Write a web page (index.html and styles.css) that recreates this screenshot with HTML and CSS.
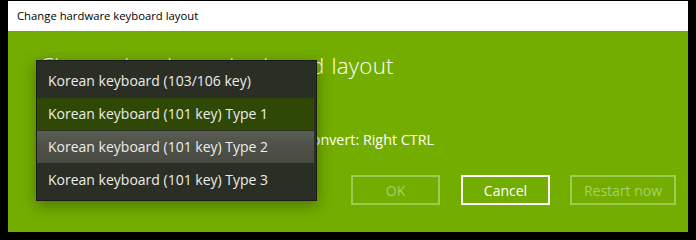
FILE: index.html
```html
<!DOCTYPE html>
<html lang="en">
<head>
    <meta charset="UTF-8">
    <title>Change hardware keyboard layout</title>
    <link rel="stylesheet" href="styles.css">
</head>
<body>
    <div class="window">
        <div class="titlebar">Change hardware keyboard layout</div>
        <div class="content">
            <h1>Change hardware keyboard layout</h1>
            <div class="combo">Korean keyboard (101 key) Type 1</div>
            <p class="info">Hangul/English toggle: Right ALT, Hanja convert: Right CTRL</p>
            <div class="buttons">
                <button class="btn btn-ok" disabled>OK</button>
                <button class="btn btn-cancel">Cancel</button>
                <button class="btn btn-restart" disabled>Restart now</button>
            </div>
            <ul class="dropdown">
                <li class="item">Korean keyboard (103/106 key)</li>
                <li class="item selected">Korean keyboard (101 key) Type 1</li>
                <li class="item hover">Korean keyboard (101 key) Type 2</li>
                <li class="item">Korean keyboard (101 key) Type 3</li>
            </ul>
        </div>
    </div>
</body>
</html>
```

FILE: styles.css
```css
html, body {
    margin: 0;
    padding: 0;
    background: #000;
    font-family: "Open Sans", "Noto Sans", sans-serif;
}
.window {
    position: relative;
    width: 680px;
    height: 231px;
    margin: 1px 8px 0 8px;
    background: #73ad00;
}
.titlebar {
    height: 30px;
    line-height: 30px;
    background: #fff;
    color: #000;
    font-size: 11.3px;
    padding-left: 9px;
}
.content {
    padding: 20px 12px 0 32px;
    color: #fff;
}
h1 {
    margin: 0;
    font-size: 22.4px;
    font-weight: 300;
    line-height: 30px;
    letter-spacing: 0.2px;
    word-spacing: 1px;
}
.combo {
    margin-top: 17px;
    height: 32px;
    line-height: 32px;
    font-size: 14px;
    padding-left: 10px;
}
.info {
    margin: 0;
    font-size: 14.35px;
    line-height: 20px;
}
.buttons {
    display: flex;
    justify-content: flex-end;
    gap: 20px;
    margin-top: 25px;
}
.btn {
    height: 30px;
    border: 2px solid #fff;
    background: transparent;
    color: #fff;
    font-family: inherit;
    font-size: 14px;
    padding: 0;
}
.btn:disabled {
    border-color: #9fcb55;
    color: #a8cf66;
}
.btn-ok, .btn-cancel {
    width: 89px;
}
.btn-restart {
    width: 106px;
}
.btn-ok {
    margin-right: 1px;
}
.dropdown {
    position: absolute;
    left: 28px;
    top: 59px;
    width: 277px;
    margin: 0;
    padding: 4px 2px 4px 0;
    list-style: none;
    background: #2b2e25;
    border: 1px solid #1b1d17;
    box-shadow: 0 4px 14px rgba(0, 0, 0, 0.35);
}
.item {
    height: 32px;
    line-height: 32px;
    margin-bottom: 1px;
    padding-left: 11px;
    font-size: 14px;
    color: #ececea;
}
.item:last-child {
    margin-bottom: 0;
}
.item.selected {
    background: #304805;
}
.item.hover {
    background: linear-gradient(180deg, #5b5e54 0%, #4f5248 40%, #494b42 100%);
}
```
